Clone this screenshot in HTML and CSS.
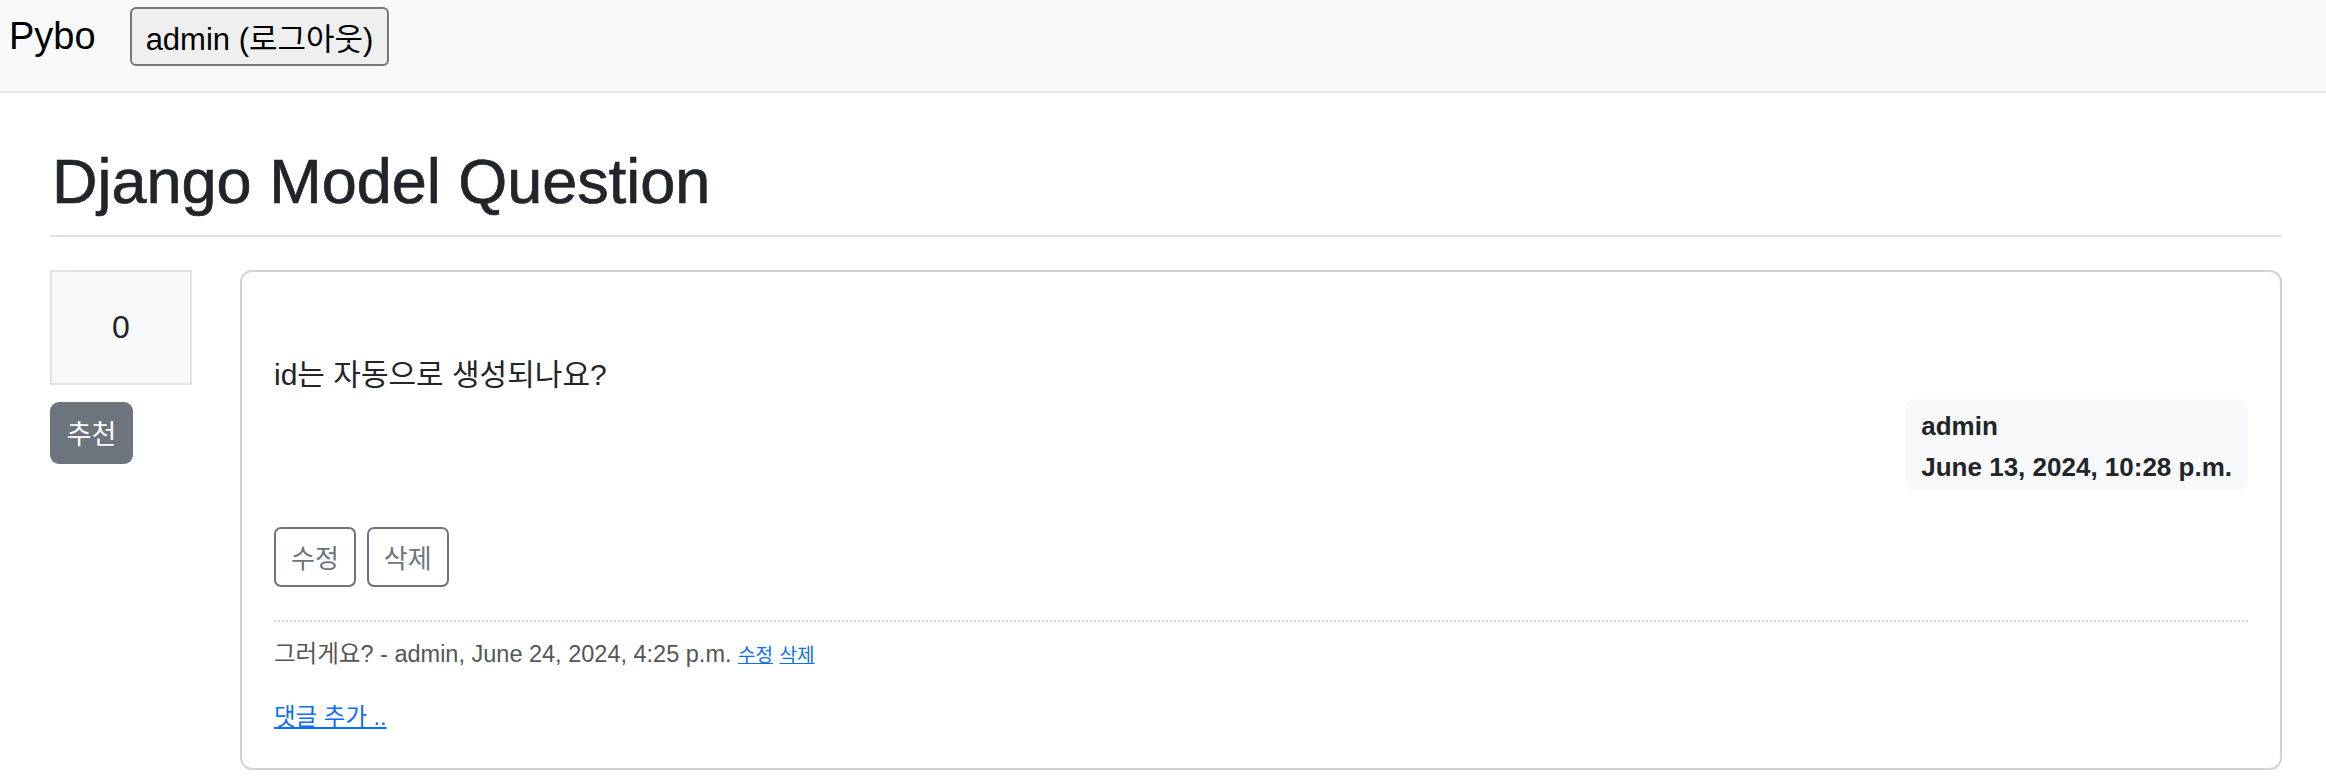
FILE: index.html
```html
<!DOCTYPE html>
<html lang="ko">
<head>
<meta charset="utf-8">
<title>Pybo</title>
<link rel="stylesheet" href="styles.css">
</head>
<body>
<nav class="navbar">
  <a class="brand" href="#">Pybo</a>
  <button class="logout" type="button">admin (로그아웃)</button>
</nav>
<main class="container">
  <h1 class="title">Django Model Question</h1>
  <div class="row">
    <div class="vote-col">
      <div class="vote-count">0</div>
      <a class="btn-vote" href="#">추천</a>
    </div>
    <div class="card">
      <div class="question">id는 자동으로 생성되나요?</div>
      <div class="author-row">
        <div class="badge">
          <div class="badge-name">admin</div>
          <div class="badge-date">June 13, 2024, 10:28 p.m.</div>
        </div>
      </div>
      <div class="actions">
        <a class="btn-outline" href="#">수정</a>
        <a class="btn-outline" href="#">삭제</a>
      </div>
      <div class="comment">그러게요? - admin, June 24, 2024, 4:25 p.m. <a class="small-link" href="#">수정</a> <a class="small-link" href="#">삭제</a></div>
      <div class="add-comment"><a href="#">댓글 추가 ..</a></div>
    </div>
  </div>
</main>
</body>
</html>
```

FILE: styles.css
```css
* { box-sizing: border-box; }

body {
  margin: 0;
  background: #fff;
  color: #212529;
  font-family: "Liberation Sans", "Noto Sans CJK KR", sans-serif;
}

.navbar {
  display: flex;
  align-items: center;
  gap: 34px;
  height: 93px;
  padding: 0 0 19px 9px;
  background: #f8f9fa;
  border-bottom: 2px solid #e3e5e8;
}

.brand {
  color: #000;
  text-decoration: none;
  font-size: 38px;
  line-height: 1;
}

.logout {
  height: 59px;
  padding: 0 14px;
  font-family: inherit;
  font-size: 31px;
  color: #000;
  background: #efefef;
  border: 2px solid #767676;
  border-radius: 6px;
}

.container {
  padding: 0 44px 0 50px;
}

.title {
  margin: 51px 0 0;
  padding: 0 0 15px 2px;
  font-size: 63px;
  font-weight: 400;
  line-height: 1.2;
  -webkit-text-stroke: 0.7px #212529;
  border-bottom: 2px solid #dee2e6;
}

.row {
  display: flex;
  margin-top: 33px;
}

.vote-col {
  width: 190px;
  flex: none;
  display: flex;
  flex-direction: column;
  align-items: flex-start;
}

.vote-count {
  width: 142px;
  height: 115px;
  display: flex;
  align-items: center;
  justify-content: center;
  font-size: 32px;
  background: #f8f9fa;
  border: 2px solid #e0e3e7;
}

.btn-vote {
  margin-top: 17px;
  width: 83px;
  height: 62px;
  display: flex;
  align-items: center;
  justify-content: center;
  background: #6c757d;
  color: #fff;
  font-size: 27px;
  border-radius: 9px;
  text-decoration: none;
}

.card {
  flex: 1;
  border: 2px solid #d2d2d2;
  border-radius: 12px;
  padding: 32px;
}

.question {
  margin-top: 48px;
  font-size: 30px;
  line-height: 45px;
}

.author-row {
  display: flex;
  justify-content: flex-end;
  margin-top: 2px;
}

.badge {
  background: #f8f9fa;
  border-radius: 10px;
  padding: 14px 16px 11px;
  font-size: 26px;
  font-weight: 700;
  line-height: 1;
  color: #212529;
}

.badge-name {
  margin-bottom: 15px;
}

.actions {
  display: flex;
  gap: 11px;
  margin-top: 36px;
}

.btn-outline {
  height: 60px;
  padding: 0 15px;
  display: flex;
  align-items: center;
  font-size: 26px;
  color: #6c757d;
  border: 2px solid #6c757d;
  border-radius: 7px;
  text-decoration: none;
}

.comment {
  margin-top: 33px;
  padding-top: 15px;
  border-top: 2px dotted #d6d6d6;
  font-size: 23.5px;
  line-height: 34px;
  color: #555;
}

.small-link {
  font-size: 19px;
  color: #0d6efd;
}

.add-comment {
  margin-top: 25px;
  font-size: 23.5px;
  line-height: 38px;
}

.add-comment a {
  color: #0d6efd;
}
```
